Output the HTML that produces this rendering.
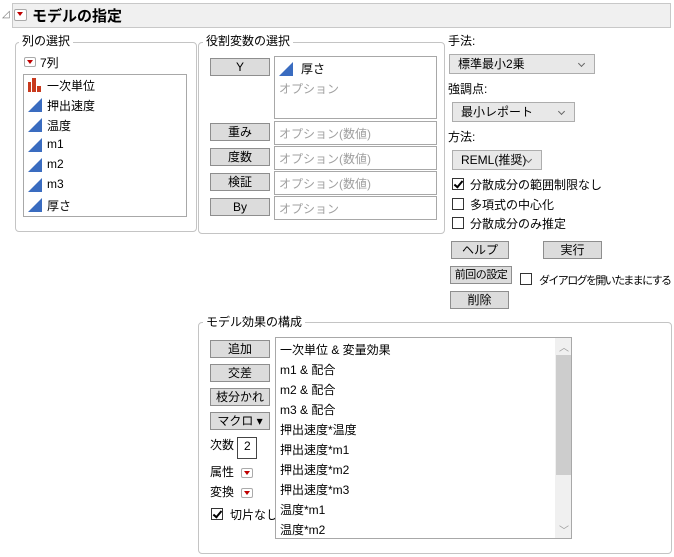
<!DOCTYPE html><html><head><meta charset="utf-8"><style>
body{margin:0;width:674px;height:557px;background:#fff;font-family:"Liberation Sans","Noto Sans CJK JP",sans-serif;font-size:12px;color:#000;position:relative;overflow:hidden}
.a{position:absolute;white-space:nowrap}
.grp{position:absolute;border:1px solid #c4c4c4;border-radius:4px}
.gt{position:absolute;background:#fff;padding:0 3px;font-size:12px;line-height:14px}
.btn{position:absolute;background:#dcdcdc;border:1px solid #8e8e8e;text-align:center;font-size:12px;box-sizing:border-box;line-height:16px}
.box{position:absolute;border:1px solid #a8a8a8;background:#fff;box-sizing:border-box}
.ph{color:#a0a0a0;font-size:12px;position:absolute;left:4px;top:3px}
.sel{position:absolute;background:#e8e8e8;border:1px solid #adadad;box-sizing:border-box;line-height:18px;padding-left:8px;font-size:12px}
.sel:after{content:"";position:absolute;right:10px;top:6px;width:4px;height:4px;border-right:1px solid #666;border-bottom:1px solid #666;transform:rotate(45deg)}
.cb{position:absolute;width:12px;height:12px;border:1px solid #333;background:#fff;box-sizing:border-box}
.ck:after{content:"";position:absolute;left:3px;top:0px;width:3px;height:7px;border-right:2px solid #000;border-bottom:2px solid #000;transform:rotate(40deg)}
.rd{position:absolute;width:12px;height:10px;border:1px solid #aaa;border-radius:2px;background:#fff;box-sizing:border-box}
.rd:after{content:"";position:absolute;left:2px;top:2px;border-left:3px solid transparent;border-right:3px solid transparent;border-top:4px solid #c00000}
.tri{position:absolute;width:0;height:0;border-left:14px solid transparent;border-bottom:14px solid #3a6cc0}
.it{position:absolute;left:4px;font-size:12px}
</style></head><body>
<div class="a" style="left:2px;top:9px;color:#777;font-size:10px">◿</div>
<div class="a" style="left:12px;top:3px;width:657px;height:23px;background:#f0f0f0;border:1px solid #c8c8c8"></div>
<div class="rd" style="left:14px;top:9px;width:13px;height:12px"></div>
<div class="a" style="left:32px;top:5px;font-size:15px;font-weight:bold">モデルの指定</div>

<div class="grp" style="left:15px;top:42px;width:180px;height:188px"></div>
<div class="gt" style="left:19px;top:34px">列の選択</div>
<div class="rd" style="left:24px;top:57px"></div>
<div class="a" style="left:40px;top:54px">7列</div>
<div class="box" style="left:23px;top:74px;width:164px;height:143px"></div>
<svg class="a" style="left:28px;top:78px" width="14" height="14"><rect x="0" y="4" width="3" height="10" fill="#c83a1e"/><rect x="4" y="0" width="4" height="14" fill="#c83a1e"/><rect x="9" y="8" width="4" height="6" fill="#c83a1e"/></svg>
<div class="a" style="left:47px;top:77px">一次単位</div>
<div class="tri" style="left:28px;top:98px"></div><div class="a" style="left:47px;top:97px">押出速度</div>
<div class="tri" style="left:28px;top:118px"></div><div class="a" style="left:47px;top:117px">温度</div>
<div class="tri" style="left:28px;top:138px"></div><div class="a" style="left:47px;top:137px">m1</div>
<div class="tri" style="left:28px;top:158px"></div><div class="a" style="left:47px;top:157px">m2</div>
<div class="tri" style="left:28px;top:178px"></div><div class="a" style="left:47px;top:177px">m3</div>
<div class="tri" style="left:28px;top:198px"></div><div class="a" style="left:47px;top:197px">厚さ</div>

<div class="grp" style="left:198px;top:42px;width:245px;height:190px"></div>
<div class="gt" style="left:203px;top:34px">役割変数の選択</div>
<div class="btn" style="left:210px;top:58px;width:60px;height:18px">Y</div>
<div class="btn" style="left:210px;top:123px;width:60px;height:18px">重み</div>
<div class="btn" style="left:210px;top:148px;width:60px;height:18px">度数</div>
<div class="btn" style="left:210px;top:173px;width:60px;height:18px">検証</div>
<div class="btn" style="left:210px;top:198px;width:60px;height:18px">By</div>
<div class="box" style="left:274px;top:56px;width:163px;height:63px"><div class="tri" style="left:4px;top:5px"></div><div class="a" style="left:26px;top:3px">厚さ</div><div class="ph" style="top:23px">オプション</div></div>
<div class="box" style="left:274px;top:121px;width:163px;height:24px"><div class="ph">オプション(数値)</div></div>
<div class="box" style="left:274px;top:146px;width:163px;height:24px"><div class="ph">オプション(数値)</div></div>
<div class="box" style="left:274px;top:171px;width:163px;height:24px"><div class="ph">オプション(数値)</div></div>
<div class="box" style="left:274px;top:196px;width:163px;height:24px"><div class="ph">オプション</div></div>

<div class="a" style="left:448px;top:32px">手法:</div>
<div class="sel" style="left:449px;top:54px;width:146px;height:20px">標準最小2乗</div>
<div class="a" style="left:448px;top:80px">強調点:</div>
<div class="sel" style="left:452px;top:102px;width:123px;height:20px">最小レポート</div>
<div class="a" style="left:448px;top:128px">方法:</div>
<div class="sel" style="left:452px;top:150px;width:90px;height:20px">REML(推奨)</div>
<div class="cb ck" style="left:452px;top:178px"></div><div class="a" style="left:470px;top:176px">分散成分の範囲制限なし</div>
<div class="cb" style="left:452px;top:198px"></div><div class="a" style="left:470px;top:196px">多項式の中心化</div>
<div class="cb" style="left:452px;top:217px"></div><div class="a" style="left:470px;top:215px">分散成分のみ推定</div>
<div class="btn" style="left:451px;top:241px;width:58px;height:18px">ヘルプ</div>
<div class="btn" style="left:543px;top:241px;width:59px;height:18px">実行</div>
<div class="btn" style="left:450px;top:266px;width:62px;height:18px;font-size:11px;letter-spacing:-0.5px">前回の設定</div>
<div class="cb" style="left:520px;top:273px"></div><div class="a" style="left:539px;top:272px;font-size:11px;letter-spacing:-1.6px">ダイアログを開いたままにする</div>
<div class="btn" style="left:450px;top:291px;width:59px;height:18px">削除</div>

<div class="grp" style="left:198px;top:322px;width:472px;height:230px"></div>
<div class="gt" style="left:203px;top:315px">モデル効果の構成</div>
<div class="btn" style="left:210px;top:340px;width:60px;height:18px">追加</div>
<div class="btn" style="left:210px;top:364px;width:60px;height:18px">交差</div>
<div class="btn" style="left:210px;top:388px;width:60px;height:18px">枝分かれ</div>
<div class="btn" style="left:210px;top:412px;width:60px;height:18px">マクロ ▾</div>
<div class="a" style="left:210px;top:436px">次数</div>
<div class="box" style="left:237px;top:437px;width:20px;height:22px;border-color:#444"><div class="a" style="left:6px;top:1px">2</div></div>
<div class="a" style="left:210px;top:463px">属性</div><div class="rd" style="left:241px;top:468px"></div>
<div class="a" style="left:210px;top:483px">変換</div><div class="rd" style="left:241px;top:488px"></div>
<div class="cb ck" style="left:211px;top:508px"></div><div class="a" style="left:230px;top:506px">切片なし</div>
<div class="box" style="left:275px;top:337px;width:297px;height:202px">
<div class="a" style="left:279px;top:0;width:16px;height:200px;background:#f0f0f0"></div>
<div class="a" style="left:280px;top:17px;width:15px;height:120px;background:#cdcdcd"></div>
<div class="a" style="left:283px;top:1px;color:#999;font-size:10px">︿</div>
<div class="a" style="left:283px;top:184px;color:#999;font-size:10px">﹀</div>
<div class="it" style="top:3px">一次単位 &amp; 変量効果</div>
<div class="it" style="top:23px">m1 &amp; 配合</div>
<div class="it" style="top:43px">m2 &amp; 配合</div>
<div class="it" style="top:63px">m3 &amp; 配合</div>
<div class="it" style="top:83px">押出速度*温度</div>
<div class="it" style="top:103px">押出速度*m1</div>
<div class="it" style="top:123px">押出速度*m2</div>
<div class="it" style="top:143px">押出速度*m3</div>
<div class="it" style="top:163px">温度*m1</div>
<div class="it" style="top:183px">温度*m2</div>
</div>
</body></html>
